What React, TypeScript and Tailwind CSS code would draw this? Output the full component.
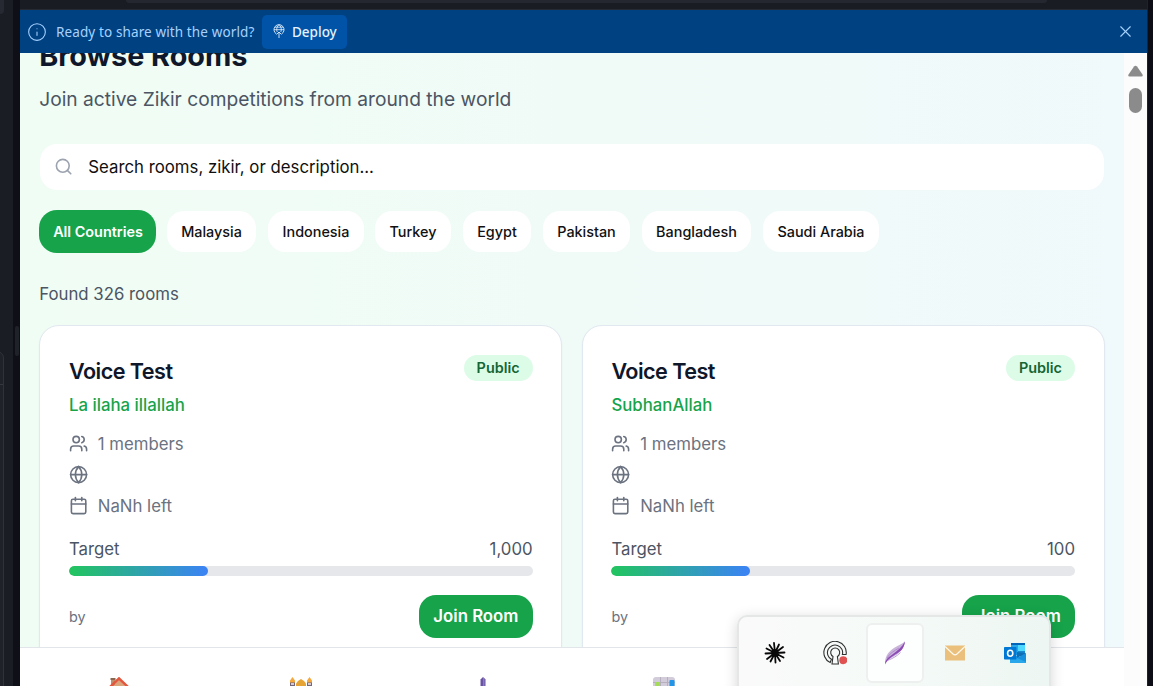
import { Calendar, Globe, Info, Search, Users, X } from "lucide-react";

const countries = [
  { name: "Malaysia", width: "w-[89px]", gap: "ml-[11px]" },
  { name: "Indonesia", width: "w-[96px]", gap: "ml-[12px]" },
  { name: "Turkey", width: "w-[76px]", gap: "ml-[11px]" },
  { name: "Egypt", width: "w-[68px]", gap: "ml-[12px]" },
  { name: "Pakistan", width: "w-[87px]", gap: "ml-[12px]" },
  { name: "Bangladesh", width: "w-[109px]", gap: "ml-[12px]" },
  { name: "Saudi Arabia", width: "w-[116px]", gap: "ml-[12px]" },
];

const rooms = [
  { title: "Voice Test", zikir: "La ilaha illallah", target: "1,000" },
  { title: "Voice Test", zikir: "SubhanAllah", target: "100" },
];

function DeployIcon() {
  return (
    <svg className="h-[15px] w-3" viewBox="0 0 12 15" fill="none" stroke="currentColor" strokeWidth="0.9">
      <path d="M3.500 10A5 5 0 1 1 8.500 10" />
      <path d="M1 5.700h10M1.900 3.200h8.200" strokeWidth="0.8" />
      <path d="M4.200 8C3 5.500 4 1.800 6 .8c2 1 3 4.700 1.800 7.200" strokeWidth="0.8" />
      <path d="M6 14V8M3.700 10.300 6 8l2.300 2.300" />
    </svg>
  );
}

function RoomCard({ room }: { room: (typeof rooms)[number] }) {
  return (
    <article className="h-[370px] flex-1 rounded-[20px] border border-[#e2e8f0] bg-white px-[28.8px] pt-[29px] shadow-xs">
      <div className="flex h-[32px] items-start justify-between">
        <h2 className="text-[21.6px] leading-[32px] font-semibold tracking-[-0.54px] text-[#0f172a]">{room.title}</h2>
        <span className="flex h-[26px] w-[69px] items-center justify-center rounded-full bg-[#dcfce7] text-[14.4px] font-semibold text-[#166534]">
          Public
        </span>
      </div>
      <p className="mt-[5px] text-[16.8px] leading-[26px] font-medium text-[#16a34a]">{room.zikir}</p>
      <div className="mt-[13px] flex flex-col gap-[6px] text-[16.8px] leading-[25px] text-[#6b7280]">
        <div className="flex h-[25px] items-center gap-[9.6px]">
          <Users size={19.2} />
          <span className="pt-[2px]">1 members</span>
        </div>
        <div className="flex h-[25px] items-center">
          <Globe size={19.2} />
        </div>
        <div className="flex h-[26px] items-center gap-[9.6px]">
          <Calendar size={19.2} />
          <span className="pt-px">NaNh left</span>
        </div>
      </div>
      <div className="mt-[18px] flex justify-between text-[16.8px] leading-[25px] text-[#4b5563]">
        <span>Target</span>
        <span>{room.target}</span>
      </div>
      <div className="mt-[4px] h-[10px] overflow-hidden rounded-full bg-[#e5e7eb]">
        <div className="h-full w-[30%] rounded-full bg-linear-to-r/srgb from-[#22c55e] to-[#3b82f6]" />
      </div>
      <div className="mt-[19px] flex items-center justify-between">
        <span className="text-[14.4px] text-[#6b7280]">by</span>
        <button className="h-[43px] w-[113.5px] rounded-[17px] bg-[#16a34a] text-[16.8px] font-semibold text-white">
          Join Room
        </button>
      </div>
    </article>
  );
}

function HouseIcon() {
  return (
    <svg className="size-[26px]" viewBox="0 0 26 26">
      <path d="M5 2h4v9H5z" fill="#b9916d" />
      <path d="M4.500 1h5v2h-5z" fill="#8d6650" />
      <path d="M4 12 13 3l9 9v13H4z" fill="#d9a77b" />
      <path d="M2 12 13 1.500 24 12" fill="none" stroke="#e2573d" strokeWidth="2.600" />
    </svg>
  );
}

function MosqueIcon() {
  return (
    <svg className="size-[26px]" viewBox="0 0 26 26">
      <path d="M2 5h5v20H2zM19 5h5v20h-5z" fill="#746779" />
      <path d="M3 6h3v2H3zM20 6h3v2h-3z" fill="#d5c8d1" />
      <path d="M4.500 0 7 3.500v2H2v-2zM21.500 0 24 3.500v2h-5v-2z" fill="#f4a83d" />
      <path d="M8 6.500Q9 4 13 2q4 2 5 4.500V25H8z" fill="#e6a435" />
    </svg>
  );
}

function TowerIcon() {
  return (
    <svg className="size-[26px]" viewBox="0 0 26 26">
      <path d="M10.500 2.500 13 0l2.500 2.500V26h-5z" fill="#6953a5" />
      <path d="M13 1h1.500v24H13z" fill="#8b79be" />
    </svg>
  );
}

function ChartIcon() {
  return (
    <svg className="size-[26px]" viewBox="0 0 26 26">
      <rect x="1" y="0" width="22" height="25" rx="3" fill="#d1cbda" />
      <path d="M8.500 0v25M15.500 0v25M1 5.500h22" stroke="#b5afbe" />
      <rect x="3" y="5" width="5" height="20" rx="1" fill="#a4db59" />
      <rect x="17.500" y="3" width="5" height="22" rx="1" fill="#2196e8" />
    </svg>
  );
}

function BurstIcon() {
  return (
    <svg className="size-[22px]" viewBox="0 0 22 22" stroke="#080808" strokeWidth="1.800" strokeLinecap="round">
      <path d="M11 11 10 1M11 11l4-8.500M11 11l8-6M11 11l9.500-.5M11 11l8.500 4.500M11 11l5 8M11 11l.5 9.500M11 11l-4.500 8.500M11 11l-8 6M11 11l-9.500.5M11 11 2.500 6.500M11 11 5.500 3" />
      <circle cx="11" cy="11" r="3.500" fill="#080808" stroke="none" />
    </svg>
  );
}

function PodcastIcon() {
  return (
    <svg className="size-6" viewBox="0 0 24 24" fill="none" stroke="#303030" strokeWidth="1.100">
      <path d="M7.200 21.600A11.200 11.200 0 1 1 23.100 13.500h-3.700A7.600 7.600 0 1 0 8.400 18.300z" />
      <path d="M9 23 10 15.500a4.500 4.500 0 1 1 4.400 0L15.400 23z" />
      <circle cx="20.300" cy="19.200" r="4" fill="#e05252" stroke="none" />
    </svg>
  );
}

function FeatherIcon() {
  return (
    <svg className="h-6 w-[22px]" viewBox="0 0 22 24">
      <path d="M1 22C1 15 5 10 10 7c4-2.500 8-4 11-6.500-1 6-4 10-8 13-4 3-8 4-12 8.500" fill="#c9b4da" />
      <path d="M1 23.500c0-4 2-6 6-9C13 10 18 6 21 .5c-1 7-4 9.500-8 12C8 15.500 4 17.500 1 23.500" fill="#8d4ab6" />
      <path d="M3 17c3-5 7-7 12-10M3.500 19.500c5-2 9-4 13-8" fill="none" stroke="#a77bc5" strokeWidth=".7" />
    </svg>
  );
}

function MailIcon() {
  return (
    <svg className="h-4 w-5" viewBox="0 0 20 16">
      <path d="M0 .5h20v15H0z" fill="#ebc07d" />
      <path d="M0 1.500 8 9q2 1.700 4 0l8-7.500" fill="none" stroke="#fffaf0" strokeWidth="1.200" />
    </svg>
  );
}

function OutlookIcon() {
  return (
    <svg className="h-[21px] w-[22px]" viewBox="0 0 22 21">
      <path d="M7 0h14v12H7z" fill="#28a8ea" />
      <path d="M7 0h14v2H7z" fill="#0364b8" />
      <path d="M14 2h7v6h-7z" fill="#50d9ff" />
      <path d="M14 8h7v5h-7z" fill="#168bd2" />
      <path d="M6 9.500 22 18v2H6z" fill="#28a8ea" />
      <path d="m22 10-9 5 9 4z" fill="#1490df" />
      <path d="m22 10-9 5V9z" fill="#0f6fb4" />
      <rect y="4" width="12.500" height="12.500" rx=".7" fill="#0078d4" />
      <ellipse cx="6.200" cy="10.200" rx="2.600" ry="3" fill="none" stroke="white" strokeWidth="1.600" />
    </svg>
  );
}

export default function App() {
  return (
    <div className="relative flex h-[686px] w-[1153px] overflow-hidden bg-[#0c0d15] font-['Inter',sans-serif]">
      <aside className="relative w-[13px] shrink-0 bg-[#1b1d25]">
        <div className="absolute top-0 left-0 h-[14px] w-[4px] rounded-br-[4px] bg-[#272932]" />
        <div className="absolute top-[351px] -left-[8px] h-[350px] w-[12px] rounded-tr-[7px] border border-[#30323b] bg-[#20222a]">
          <div className="mt-[32px] border-t border-[#353740]" />
        </div>
      </aside>
      <div className="flex w-[7px] shrink-0 flex-col items-center bg-[#0e0f17] pt-[326px]">
        <div className="ml-[1px] h-[30px] w-[4px] rounded-full bg-[#20222a]" />
      </div>
      <div className="flex w-[1127px] shrink-0 flex-col">
        <div className="h-[10px] shrink-0 border-b border-[#262a33] bg-[#1a1c24] pl-[106px]">
          <div className="h-[3px] w-[921px] rounded-b-[4px] bg-[#252730]" />
        </div>
        <header className="flex h-[43px] shrink-0 items-center bg-[#004182] pl-[7px] font-['Noto_Sans',sans-serif] text-[#a6d2ff]">
          <Info size={20} strokeWidth={1.300} />
          <span className="ml-[9px] w-[199px] pt-[2px] text-[13.500px] tracking-[0.12px] whitespace-nowrap">Ready to share with the world?</span>
          <button className="ml-[7px] flex h-[34px] w-[85px] items-center gap-[7px] rounded-[5px] bg-[#0053a6] pl-[11px] text-[13.500px] font-medium text-[#e4f1ff]">
            <DeployIcon />
            <span className="pt-[2px]">Deploy</span>
          </button>
          <X className="mr-[12px] ml-auto" size={19} strokeWidth={1.400} />
        </header>
        <div className="flex h-[633px] shrink-0 overflow-hidden">
          <div className="flex w-[1104px] shrink-0 flex-col">
            <main className="h-[594px] shrink-0 overflow-hidden bg-linear-to-r/srgb from-[#f0fdf4] to-[#f0f9fb] px-[19.2px]">
              <h1 className="-mt-[18px] pt-px text-[28.8px] leading-[39px] font-bold text-[#0f172a]">Browse Rooms</h1>
              <p className="mt-[9px] text-[19.2px] leading-[30px] text-[#4b5563]">Join active Zikir competitions from around the world</p>
              <div className="mx-[0.5px] mt-[30px] flex h-[46px] items-center rounded-[17px] bg-white pl-[14.4px]">
                <Search size={19.2} className="text-[#9ca3af]" />
                <span className="ml-[15px] pt-[2px] text-[16.8px] text-[#0f0f0f]">Search rooms, zikir, or description...</span>
              </div>
              <nav className="-ml-[0.2px] mt-[20px] flex h-[43px] items-center">
                <button className="h-[43px] w-[117px] rounded-[18px] bg-[#16a34a] pt-px pl-px text-[14.4px] font-semibold text-white">All Countries</button>
                {countries.map((c) => (
                  <button key={c.name} className={`h-[41px] shrink-0 rounded-[17px] bg-white text-[14.4px] font-medium text-[#111] ${c.width} ${c.gap}`}>
                    {c.name}
                  </button>
                ))}
              </nav>
              <p className="mt-[29px] text-[16.8px] leading-[25px] text-[#4b5563]">Found 326 rooms</p>
              <section className="mt-[18px] flex gap-[19.2px]">
                {rooms.map((room) => (
                  <RoomCard key={room.zikir} room={room} />
                ))}
              </section>
            </main>
            <footer className="h-[39px] shrink-0 border-t border-[#e2e5e9] bg-white pt-[29px] pl-[86px]">
              <div className="flex gap-[156px]">
                <HouseIcon />
                <MosqueIcon />
                <TowerIcon />
                <ChartIcon />
              </div>
            </footer>
          </div>
          <div className="flex w-[23px] flex-col items-center bg-[#fcfcfc] pt-[12px]">
            <svg className="h-[12px] w-[15px]" viewBox="0 0 15 12" fill="#8b8b8b">
              <path d="M6 1.500Q7.500 0 9 1.500L14.500 9.500q.8 1.900-1 2h-12q-1.800-.1-1-2z" />
            </svg>
            <div className="mt-[11px] h-[25px] w-[13px] rounded-full bg-[#8b8b8b]" />
          </div>
        </div>
      </div>
      <div className="w-px bg-[#20212a]" />
      <div className="absolute top-[615px] left-[737px] flex h-[90px] w-[314px] rounded-[10px] border-2 border-[#e5e7e7] bg-linear-to-r/srgb from-[#fafafa] via-[#f5faf7] to-[#edf6f2] px-[6px] pt-[6px] shadow-[0_3px_14px_rgba(0,0,0,0.16)]">
        <div className="flex h-[60px] w-[60px] shrink-0 items-center justify-center"><BurstIcon /></div>
        <div className="flex h-[60px] w-[60px] shrink-0 items-center justify-center"><PodcastIcon /></div>
        <div className="ml-px flex h-[60px] w-[58px] shrink-0 items-center justify-center rounded-[6px] border-2 border-[#edf0ef] bg-[#fdfefe]"><FeatherIcon /></div>
        <div className="ml-px flex h-[60px] w-[60px] shrink-0 items-center justify-center"><MailIcon /></div>
        <div className="flex h-[60px] w-[60px] shrink-0 items-center justify-center"><OutlookIcon /></div>
      </div>
    </div>
  );
}
